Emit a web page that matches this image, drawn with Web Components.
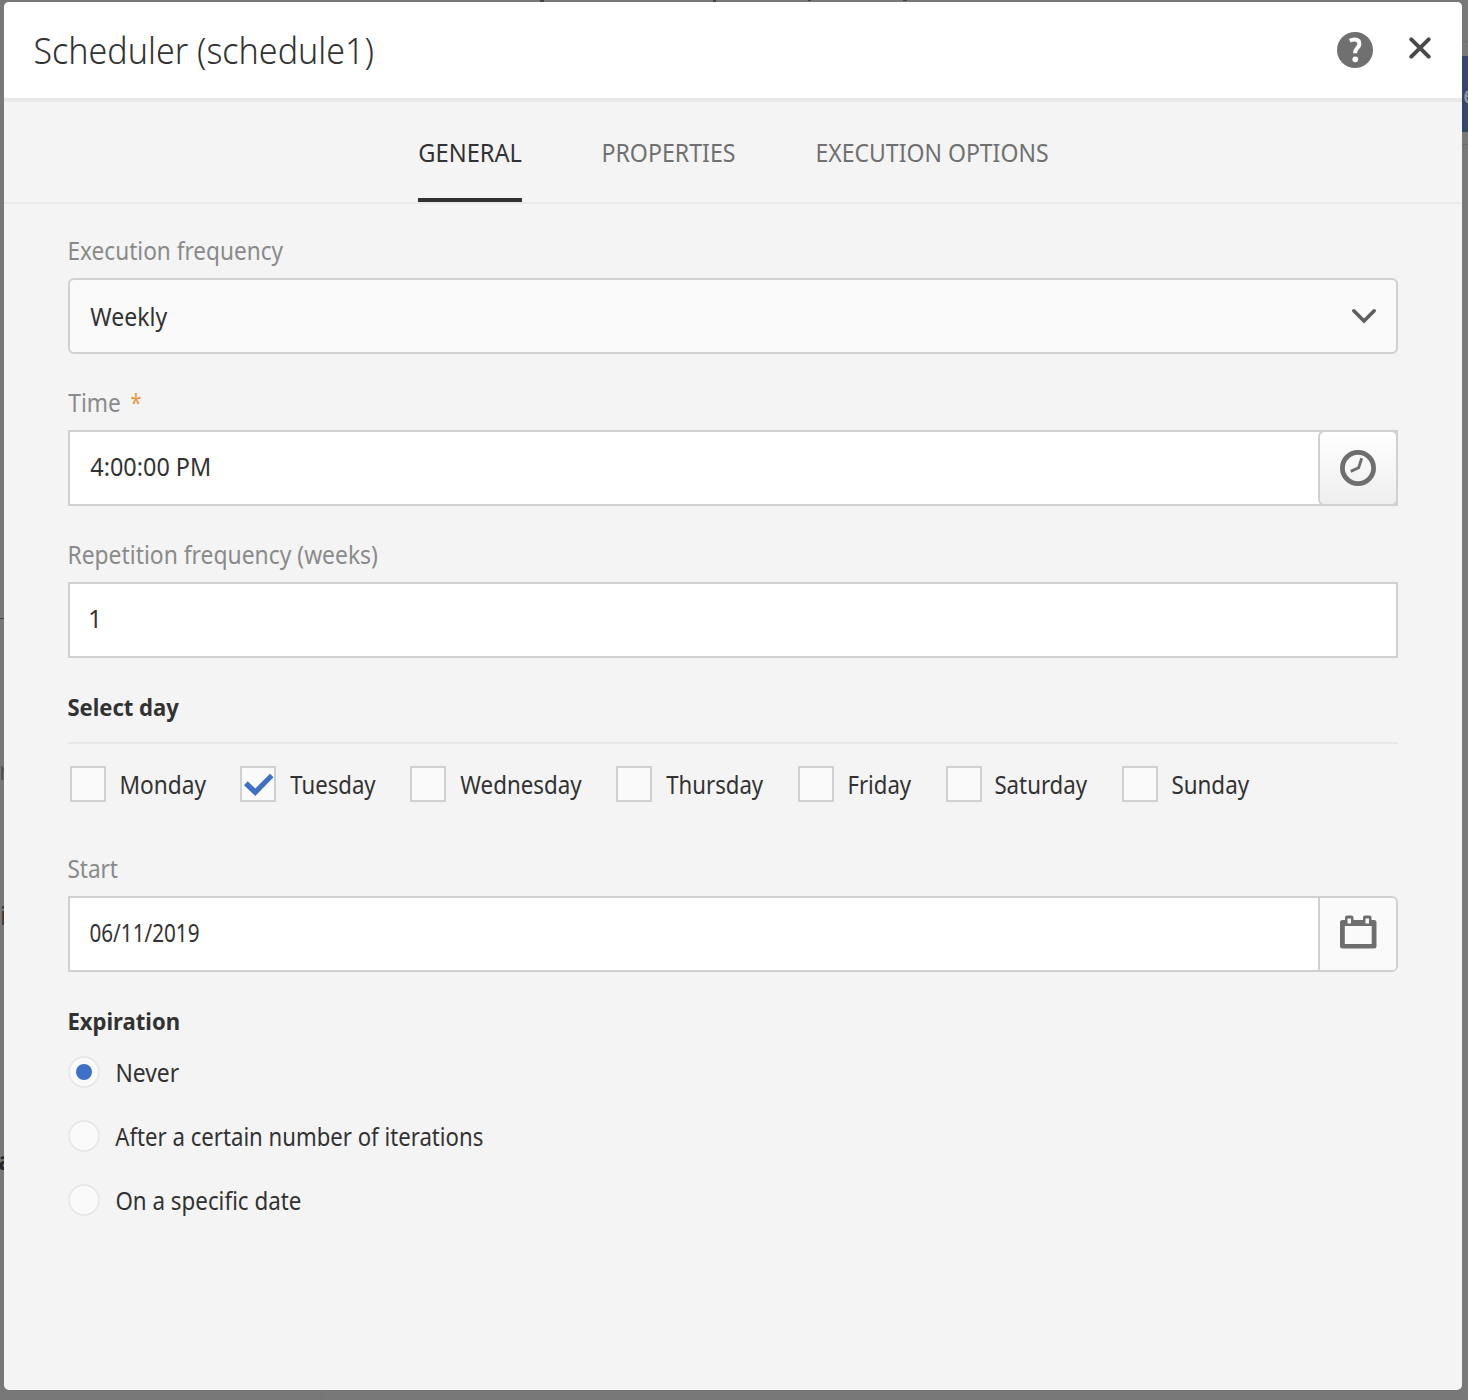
<!DOCTYPE html>
<html lang="en">
<head>
<meta charset="utf-8">
<title>Scheduler (schedule1)</title>
<style>
html,body{margin:0;height:100%;overflow:hidden}
body{background:#787878;color:#323232;font:24.5px "Noto Sans","Open Sans",sans-serif}
</style>
</head>
<body>
<page-backdrop></page-backdrop>
<scheduler-dialog></scheduler-dialog>
<script>
const define = (name, html, after) => customElements.define(name, class extends HTMLElement {
  connectedCallback() {
    if (this.shadowRoot) return;
    const root = this.attachShadow({mode: 'open'});
    const t = document.createElement('template');
    t.innerHTML = typeof html === 'function' ? html(this) : html;
    root.append(t.content.cloneNode(true));
    if (after) after(this, root);
  }
});

// A single line of text whose visible glyphs span exactly the width in "w".
define('fit-text', el => `<style>
:host{display:block;flex:none;white-space:nowrap;width:${el.getAttribute('w')}px}
span{display:inline-block;transform-origin:0 50%}
</style><span>${el.textContent}</span>`, (el, root) => {
  const span = root.querySelector('span');
  const s = getComputedStyle(span);
  const ctx = document.createElement('canvas').getContext('2d');
  ctx.font = `${s.fontWeight} ${s.fontSize} ${s.fontFamily}`;
  const m = ctx.measureText(el.textContent);
  const k = (el.getAttribute('w') - .2) / (m.actualBoundingBoxLeft + m.actualBoundingBoxRight);
  span.style.transform = `translateX(${m.actualBoundingBoxLeft * k + .3}px) scaleX(${k})`;
});

// The dimmed page behind the dialog; only slivers of it show at the edges.
define('page-backdrop', `<style>
:host{position:absolute;inset:0;overflow:hidden;color:#3b3b3b}
i{position:absolute;background:#444}
b{position:absolute;font-weight:400;line-height:30px}
.action{left:1440px;top:56px;width:60px;height:76px;background:#34466d;color:#999;}
.action b{left:23px;top:24px}
</style>
<i style="left:1462px;top:41px;width:6px;height:1px;background:#707070"></i>
<i class="action"><b style="font-style:normal">e</b></i>
<i style="left:1462px;top:144px;width:6px;height:1px;background:#6d6d6d"></i>
<i style="left:540px;top:0;width:4px;height:2px"></i>
<i style="left:713px;top:0;width:3px;height:2px"></i>
<i style="left:808px;top:0;width:3px;height:1px"></i>
<i style="left:903px;top:0;width:4px;height:1px"></i>
<i style="left:0;top:618px;width:4px;height:1px"></i>
<b style="left:-1px;top:756px;color:#505050">r</b>
<b style="left:0;top:901px">i</b>
<b style="left:-2px;top:1146px;font-weight:700;color:#292929">a</b>
<i style="left:321px;top:1390px;width:1px;height:10px;background:#747474"></i>`);

const ICONS = {
  help: [36, 36, '<circle cx="18" cy="18" r="18" fill="#707070"/><path d="M12.8 8.8C16.8 6.6 22.4 7.2 22.4 11.8C22.4 16 18 16 18 21.2" fill="none" stroke="#fff" stroke-width="4"/><circle cx="18.3" cy="27.3" r="2.9" fill="#fff"/>'],
  close: [22, 22, '<path d="M2.3 2.3L19.700 19.700M19.700 2.3L2.3 19.700" fill="none" stroke="#4b4b4b" stroke-width="4" stroke-linecap="round"/>'],
  chevron: [26, 16, '<path d="M2.8 2.8L13 13L23.2 2.8" fill="none" stroke="#5e5e5e" stroke-width="3.600" stroke-linecap="round"/>'],
  clock: [36, 36, '<circle cx="18" cy="18" r="15.600" fill="none" stroke="#6e6e6e" stroke-width="4.800"/><path d="M21.7 8.3L18.6 17.7L10.7 21.4" fill="none" stroke="#6e6e6e" stroke-width="2.900"/>'],
  calendar: [37, 34, '<path fill="#6e6e6e" fill-rule="evenodd" d="M2.5 5H5V2.500Q5 .5 7 .5H11.500Q13.500 .5 13.500 2.500V5H23V2.500Q23 .5 25 .5H29.500Q31.500 .5 31.500 2.500V5H34Q36.500 5 36.500 7.500V31Q36.500 33.500 34 33.500H2.500Q0 33.500 0 31V7.500Q0 5 2.500 5ZM4.800 11V29H31.700V11ZM7.500 3.500V8.500H11V3.500ZM25.500 3.500V8.500H29V3.500Z"/>'],
  check: [30, 24, '<path d="M0 12.300L3.700 8.300L11.300 15.500L26 .8L29.500 4.300L11.300 23Z" fill="#3d70c6"/>']
};
define('ui-icon', el => {
  const [w, h, body] = ICONS[el.getAttribute('name')];
  return `<style>:host{display:block;flex:none;width:${w}px;height:${h}px}svg{display:block}</style><svg width="${w}" height="${h}" viewBox="0 0 ${w} ${h}">${body}</svg>`;
});

define('dialog-header', `<style>
:host{display:flex;align-items:flex-start;height:96px;background:#fff;border-bottom:4px solid #e9e9e9;padding-left:31px;padding-right:31px}
.title{font-size:37.5px;font-weight:300;line-height:96px;margin-top:-.5px;flex:1}
.help{margin-top:30px;margin-right:36px}.close{margin-top:35px}
</style>
<div class="title"><slot></slot></div>
<ui-icon class="help" name="help"></ui-icon><ui-icon class="close" name="close"></ui-icon>`);

define('tab-bar', `<style>
:host{display:flex;height:100px;border-bottom:2px solid #e9e9e9;padding-left:414px;gap:80px}
</style><slot></slot>`);
define('tab-item', `<style>
:host{display:block;box-sizing:border-box;height:100px;line-height:100px;padding-top:1px;color:#707070;font-size:24.5px;flex:none}
:host([selected]){color:#323232;border-bottom:4px solid #323232}
div{padding-left:1px}
</style><div><slot></slot></div>`);

define('form-field', `<style>
:host{display:block}
.label{display:flex;gap:11px;height:48px;line-height:42px;color:#8a8a8a}
</style><div class="label"><slot name="label"></slot></div><slot></slot>`);
define('form-input', el => {
  const icon = el.getAttribute('icon');
  const action = !icon ? '' : icon === 'chevron'
    ? '<ui-icon class="chevron" name="chevron"></ui-icon>'
    : `<div class="button ${icon}"><ui-icon name="${icon}"></ui-icon></div>`;
  return `<style>
:host{display:flex;box-sizing:border-box;height:76px;border:2px solid #d0d0d0;background:#fff}
:host([kind=select]){background:#fafafa;border-radius:6px}
:host([icon=calendar]){border-radius:0 6px 6px 0}
.value{flex:1;padding-left:20px;line-height:70px}
:host([kind=select]) .value{line-height:74px}
.button{display:flex;box-sizing:border-box;width:78px;align-items:center;justify-content:center;border-left:2px solid #d0d0d0;background:#fafafa}
.button.calendar{border-radius:0 4px 4px 0;padding:0 0 4px 1px}
.button.clock{border-radius:5px;background:linear-gradient(#fff,#eee);box-shadow:0 0 0 2px #d0d0d0;border:0;width:76px}
.chevron{margin:28px 19px 0 0}
</style><div class="value"><slot></slot></div>${action}`;
});

define('section-title', `<style>
:host{display:block;height:56px;line-height:42px;font-weight:700;font-size:24px}
:host([ruled]){border-bottom:2px solid #e8e8e8}
</style><slot></slot>`);
define('check-box', el => `<style>
:host{display:flex;height:36px;line-height:37px;gap:15px;flex:none}
.box{display:flex;box-sizing:border-box;width:36px;height:36px;border:2px solid #d0d0d0;background:#fafafa;padding:5px 0 0 2px}
</style><div class="box">${el.hasAttribute('checked') ? '<ui-icon name="check"></ui-icon>' : ''}</div><slot></slot>`);
define('radio-button', `<style>
:host{display:flex;height:32px;line-height:33px;gap:16px}
.dot{display:flex;box-sizing:border-box;width:32px;height:32px;border:2px solid #e9e9e9;border-radius:50%;background:#fafafa;align-items:center;justify-content:center}
:host([checked]) .dot::after{content:"";width:16px;height:16px;border-radius:50%;background:#3d70c6}
</style><div class="dot"></div><slot></slot>`);

define('scheduler-dialog', `<style>
:host{display:flex;flex-direction:column;position:relative;box-sizing:border-box;width:1458px;height:1388px;margin:2px 0 0 4px;background:#f4f4f4;border-radius:5px;overflow:hidden}
.body{display:flex;flex-direction:column;gap:28px;padding:26px 64px 0}
.days{display:grid;grid-template-columns:170px 170px 206px 182px 148px 176px 140px;padding:22px 0 18px 2px}
.radios{display:flex;flex-direction:column;gap:32px}
</style>
<dialog-header><fit-text w="337.500">Scheduler (schedule1)</fit-text></dialog-header>
<tab-bar>
<tab-item selected><fit-text w="103">GENERAL</fit-text></tab-item>
<tab-item><fit-text w="132">PROPERTIES</fit-text></tab-item>
<tab-item style="margin-left:1px"><fit-text w="231">EXECUTION OPTIONS</fit-text></tab-item>
</tab-bar>
<div class="body">
<form-field><fit-text slot="label" w="214.500" style="margin-left:1px">Execution frequency</fit-text>
<form-input kind="select" icon="chevron"><fit-text w="77.500">Weekly</fit-text></form-input></form-field>
<form-field><fit-text slot="label" w="52">Time</fit-text><fit-text slot="label" w="10" style="color:#e99440">*</fit-text>
<form-input icon="clock"><fit-text w="119">4:00:00 PM</fit-text></form-input></form-field>
<form-field><fit-text slot="label" w="308.500" style="margin-left:1px">Repetition frequency (weeks)</fit-text>
<form-input><fit-text w="7">1</fit-text></form-input></form-field>
<div><section-title ruled><fit-text w="111">Select day</fit-text></section-title>
<div class="days">
<check-box><fit-text w="85.500">Monday</fit-text></check-box>
<check-box checked><fit-text w="86" style="margin-left:-1px">Tuesday</fit-text></check-box>
<check-box><fit-text w="122" style="margin-left:-1px">Wednesday</fit-text></check-box>
<check-box><fit-text w="97.500" style="margin-left:-1px">Thursday</fit-text></check-box>
<check-box><fit-text w="62.500">Friday</fit-text></check-box>
<check-box><fit-text w="92.500" style="margin-left:-2px">Saturday</fit-text></check-box>
<check-box><fit-text w="77.500" style="margin-left:-1px">Sunday</fit-text></check-box>
</div></div>
<form-field><fit-text slot="label" w="50">Start</fit-text>
<form-input icon="calendar"><fit-text w="108.500">06/11/2019</fit-text></form-input></form-field>
<div><section-title><fit-text w="109.500" style="margin-left:1px">Expiration</fit-text></section-title>
<div class="radios">
<radio-button checked><fit-text w="62" style="margin-left:.5px">Never</fit-text></radio-button>
<radio-button><fit-text w="367.500" style="margin-left:-1px">After a certain number of iterations</fit-text></radio-button>
<radio-button><fit-text w="184.500">On a specific date</fit-text></radio-button>
</div></div>
</div>`);
</script>
</body>
</html>
